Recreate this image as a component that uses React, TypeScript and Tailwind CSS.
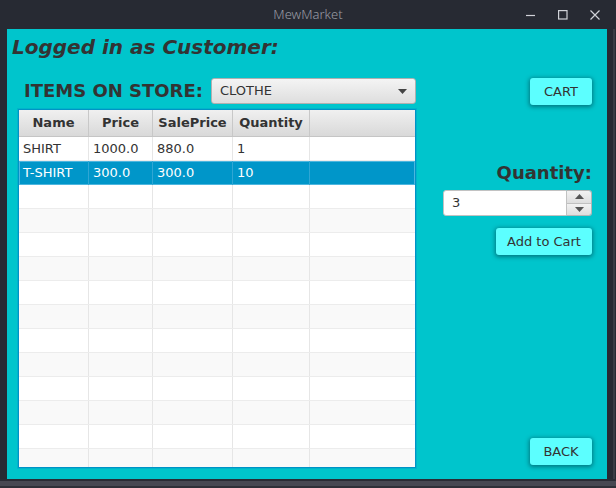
import React from "react";

const F = { fontFamily: '"DejaVu Sans", sans-serif' };

const cols = [
  { name: "Name", w: 70 },
  { name: "Price", w: 64 },
  { name: "SalePrice", w: 80 },
  { name: "Quantity", w: 77 },
];

const data = [
  ["SHIRT", "1000.0", "880.0", "1"],
  ["T-SHIRT", "300.0", "300.0", "10"],
];

function Row({ idx }: { idx: number }) {
  const selected = idx === 1;
  const cells = data[idx] ?? ["", "", "", ""];
  const bg = selected ? "bg-[#0096c9]" : idx % 2 === 1 ? "bg-[#f9f9f9]" : "bg-white";
  return (
    <div
      className={`flex h-[24px] shrink-0 ${bg} ${
        selected ? "shadow-[inset_0_0_0_1px_#4db6df] text-white" : "text-[#333] border-b border-[#ececec]"
      }`}
    >
      {cols.map((c, i) => (
        <div
          key={i}
          style={{ width: c.w }}
          className={`shrink-0 h-full flex items-center pl-[4px] text-[13px] border-r ${
            selected ? "border-[#2fa6d4]" : "border-[#e6e6e6]"
          }`}
        >
          {cells[i]}
        </div>
      ))}
      <div className="flex-1" />
    </div>
  );
}

function Btn({ children, w }: { children: React.ReactNode; w: string }) {
  return (
    <div
      className={`${w} h-[27px] rounded-[3px] bg-[#5cffff] flex items-center justify-center text-[13px] text-[#333] shadow-[0_1px_4px_1px_rgba(0,60,70,0.55)]`}
    >
      {children}
    </div>
  );
}

export default function App() {
  return (
    <div className="w-[616px] h-[488px] bg-[#272a33] flex flex-col overflow-hidden" style={F}>
      {/* title bar */}
      <div className="h-[29px] flex items-center relative shrink-0">
        <div
          className="absolute inset-0 flex items-center justify-center text-[13px] text-[#9a9da5]"
          style={{ fontFamily: '"Noto Sans", sans-serif', fontWeight: 300 }}
        >
          MewMarket
        </div>
        <div className="ml-auto flex items-center gap-[22px] pr-[16px] relative">
          <svg width="10" height="10" viewBox="0 0 10 10">
            <line x1="0" y1="5.5" x2="9" y2="5.5" stroke="#d0d2d8" strokeWidth="1.2" />
          </svg>
          <svg width="10" height="10" viewBox="0 0 10 10">
            <rect x="0.6" y="0.6" width="8.4" height="8.4" fill="none" stroke="#d0d2d8" strokeWidth="1.2" />
          </svg>
          <svg width="10" height="10" viewBox="0 0 10 10">
            <path d="M0.5 0.5 L9.5 9.5 M9.5 0.5 L0.5 9.5" stroke="#d0d2d8" strokeWidth="1.2" />
          </svg>
        </div>
      </div>

      <div className="flex shrink-0">
        <div className="w-[7px]" />
        {/* content */}
        <div className="w-[600px] h-[450px] bg-[#00c5cc] flex flex-col overflow-hidden">
          <div className="shrink-0 pl-[5px] pt-[6px] h-[49px] text-[20px] font-bold italic text-[#333] leading-[24px]">
            Logged in as Customer:
          </div>
          <div className="flex flex-1 min-h-0 pl-[11px] pr-[15px]">
            {/* left column */}
            <div className="w-[399px] min-h-0 flex flex-col pb-[11px]">
              <div className="h-[26px] flex items-center shrink-0">
                <div className="ml-[6px] text-[18px] font-bold text-[#333] leading-none">ITEMS ON STORE:</div>
                <div className="ml-auto w-[205px] h-[26px] rounded-[3px] border border-[#b0b0b0] bg-gradient-to-b from-[#f4f4f4] to-[#dedede] flex items-center pl-[8px] pr-[8px] text-[13px] text-[#333]">
                  <span>CLOTHE</span>
                  <svg className="ml-auto" width="9" height="5" viewBox="0 0 9 5">
                    <path d="M0 0 L9 0 L4.5 5 Z" fill="#444" />
                  </svg>
                </div>
              </div>
              <div className="mt-[5px] flex-1 min-h-0 border border-[#0093c6] shadow-[0_0_0_1px_rgba(0,150,201,0.35)] bg-white flex flex-col overflow-hidden">
                <div className="flex h-[27px] shrink-0 bg-gradient-to-b from-[#f0f0f0] to-[#d9d9d9] border-b border-[#c5c5c5]">
                  {cols.map((c, i) => (
                    <div
                      key={i}
                      style={{ width: c.w }}
                      className="shrink-0 h-full flex items-center justify-center text-[13px] font-bold text-[#333] border-r border-[#c8c8c8]"
                    >
                      {c.name}
                    </div>
                  ))}
                  <div className="flex-1" />
                </div>
                {Array.from({ length: 14 }).map((_, i) => (
                  <Row key={i} idx={i} />
                ))}
              </div>
            </div>
            {/* right column */}
            <div className="ml-[27px] w-[149px] flex flex-col items-end pb-[14px]">
              <Btn w="w-[62px]">CART</Btn>
              <div className="mt-[58px] text-[18px] font-bold text-[#333] leading-[20px]">Quantity:</div>
              <div className="mt-[7px] w-[149px] h-[26px] flex">
                <div className="flex-1 bg-white border border-[#c2c2c2] rounded-l-[3px] flex items-center pl-[8px] text-[13px] text-[#333]">
                  3
                </div>
                <div className="w-[25px] flex flex-col border border-l-0 border-[#b5b5b5] rounded-r-[3px] overflow-hidden">
                  <div className="flex-1 flex items-center justify-center bg-gradient-to-b from-[#f2f2f2] to-[#dedede] border-b border-[#c0c0c0]">
                    <svg width="9" height="5" viewBox="0 0 9 5">
                      <path d="M0 5 L9 5 L4.5 0 Z" fill="#555" />
                    </svg>
                  </div>
                  <div className="flex-1 flex items-center justify-center bg-gradient-to-b from-[#f2f2f2] to-[#dedede]">
                    <svg width="9" height="5" viewBox="0 0 9 5">
                      <path d="M0 0 L9 0 L4.5 5 Z" fill="#555" />
                    </svg>
                  </div>
                </div>
              </div>
              <div className="mt-[12px]">
                <Btn w="w-[96px]">Add to Cart</Btn>
              </div>
              <div className="mt-auto">
                <Btn w="w-[62px]">BACK</Btn>
              </div>
            </div>
          </div>
        </div>
        <div className="flex-1 flex justify-end">
          <div className="w-[2px] h-full bg-[#3a3c45] mr-[1px]" />
        </div>
      </div>
      <div className="h-[2px] shrink-0 bg-[#2a2c35]" />
      <div className="h-[5px] shrink-0 bg-[#474852]" />
      <div className="flex-1 bg-[#2e3038]" />
    </div>
  );
}
